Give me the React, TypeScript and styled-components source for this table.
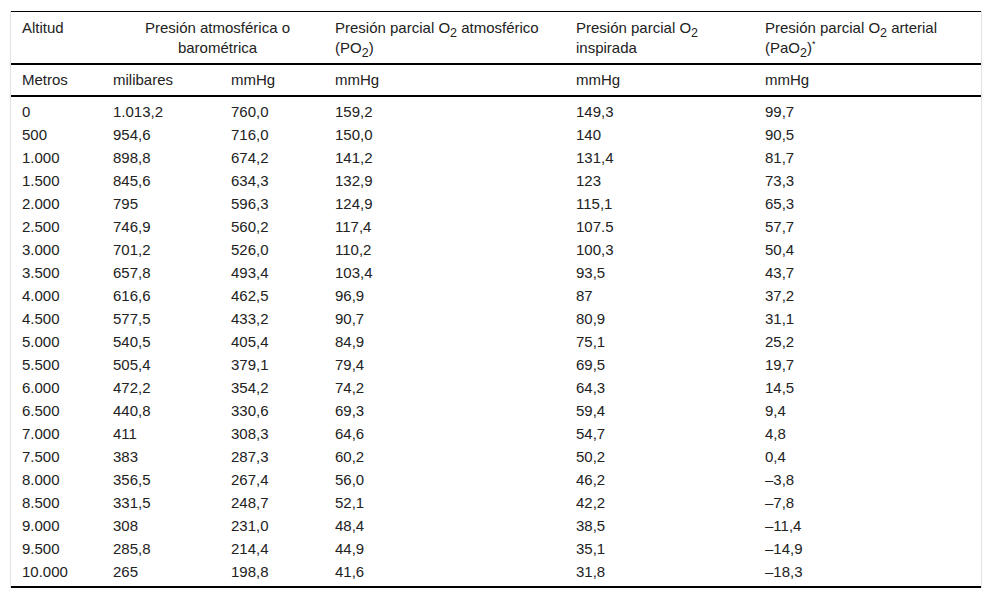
import React from 'react';
import styled, { createGlobalStyle } from 'styled-components';

const GlobalStyle = createGlobalStyle`
  html, body {
    margin: 0;
    padding: 0;
    background: #ffffff;
  }
  body {
    font-family: "Liberation Sans", Arial, sans-serif;
    color: #222222;
  }
`;

const Page = styled.div`
  padding: 11px 10px 0 10px;
`;

const Frame = styled.div`
  width: 970px;
  border-left: 1px solid #e2e2e2;
  border-right: 1px solid #e2e2e2;
`;

const Table = styled.table`
  width: 970px;
  border-collapse: collapse;
  table-layout: fixed;
  font-size: 15px;
  border-top: 1px solid #000;
  border-bottom: 2px solid #000;
`;

const HeadCell = styled.th<{ $center?: boolean }>`
  font-weight: normal;
  text-align: ${(p) => (p.$center ? 'center' : 'left')};
  vertical-align: top;
  line-height: 20px;
  padding: 6px 2px 5px 11px;
`;

const GroupRow = styled.tr`
  border-bottom: 2px solid #000;
`;

const UnitRow = styled.tr`
  border-bottom: 2px solid #000;
  & > th {
    padding: 5px 4px 5px 11px;
  }
`;

const BodyRow = styled.tr`
  &:first-child > td {
    padding-top: 3px;
  }
  &:last-child > td {
    padding-bottom: 3px;
  }
`;

const Cell = styled.td`
  line-height: 23px;
  padding: 0 4px 0 11px;
  white-space: nowrap;
`;

const Sub = styled.sub`
  font-size: 12.5px;
  line-height: 0;
  vertical-align: -4px;
`;

const Sup = styled.sup`
  font-size: 9px;
  line-height: 0;
  vertical-align: 6px;
`;

const widths = [91, 118, 104, 241, 189, 227];

const rows: string[][] = [
  ['0', '1.013,2', '760,0', '159,2', '149,3', '99,7'],
  ['500', '954,6', '716,0', '150,0', '140', '90,5'],
  ['1.000', '898,8', '674,2', '141,2', '131,4', '81,7'],
  ['1.500', '845,6', '634,3', '132,9', '123', '73,3'],
  ['2.000', '795', '596,3', '124,9', '115,1', '65,3'],
  ['2.500', '746,9', '560,2', '117,4', '107.5', '57,7'],
  ['3.000', '701,2', '526,0', '110,2', '100,3', '50,4'],
  ['3.500', '657,8', '493,4', '103,4', '93,5', '43,7'],
  ['4.000', '616,6', '462,5', '96,9', '87', '37,2'],
  ['4.500', '577,5', '433,2', '90,7', '80,9', '31,1'],
  ['5.000', '540,5', '405,4', '84,9', '75,1', '25,2'],
  ['5.500', '505,4', '379,1', '79,4', '69,5', '19,7'],
  ['6.000', '472,2', '354,2', '74,2', '64,3', '14,5'],
  ['6.500', '440,8', '330,6', '69,3', '59,4', '9,4'],
  ['7.000', '411', '308,3', '64,6', '54,7', '4,8'],
  ['7.500', '383', '287,3', '60,2', '50,2', '0,4'],
  ['8.000', '356,5', '267,4', '56,0', '46,2', '–3,8'],
  ['8.500', '331,5', '248,7', '52,1', '42,2', '–7,8'],
  ['9.000', '308', '231,0', '48,4', '38,5', '–11,4'],
  ['9.500', '285,8', '214,4', '44,9', '35,1', '–14,9'],
  ['10.000', '265', '198,8', '41,6', '31,8', '–18,3'],
];

const units = ['Metros', 'milibares', 'mmHg', 'mmHg', 'mmHg', 'mmHg'];

export default function App() {
  return (
    <>
      <GlobalStyle />
      <Page>
        <Frame>
          <Table>
            <colgroup>
              {widths.map((w, i) => (
                <col key={i} style={{ width: w }} />
              ))}
            </colgroup>
            <thead>
              <GroupRow>
                <HeadCell>Altitud</HeadCell>
                <HeadCell colSpan={2} $center>
                  Presión atmosférica o barométrica
                </HeadCell>
                <HeadCell>
                  Presión parcial O<Sub>2</Sub> atmosférico (PO<Sub>2</Sub>)
                </HeadCell>
                <HeadCell>
                  Presión parcial O<Sub>2</Sub> inspirada
                </HeadCell>
                <HeadCell>
                  Presión parcial O<Sub>2</Sub> arterial (PaO<Sub>2</Sub>)<Sup>*</Sup>
                </HeadCell>
              </GroupRow>
              <UnitRow>
                {units.map((u, i) => (
                  <HeadCell key={i}>{u}</HeadCell>
                ))}
              </UnitRow>
            </thead>
            <tbody>
              {rows.map((r) => (
                <BodyRow key={r[0]}>
                  {r.map((v, i) => (
                    <Cell key={i}>{v}</Cell>
                  ))}
                </BodyRow>
              ))}
            </tbody>
          </Table>
        </Frame>
      </Page>
    </>
  );
}
